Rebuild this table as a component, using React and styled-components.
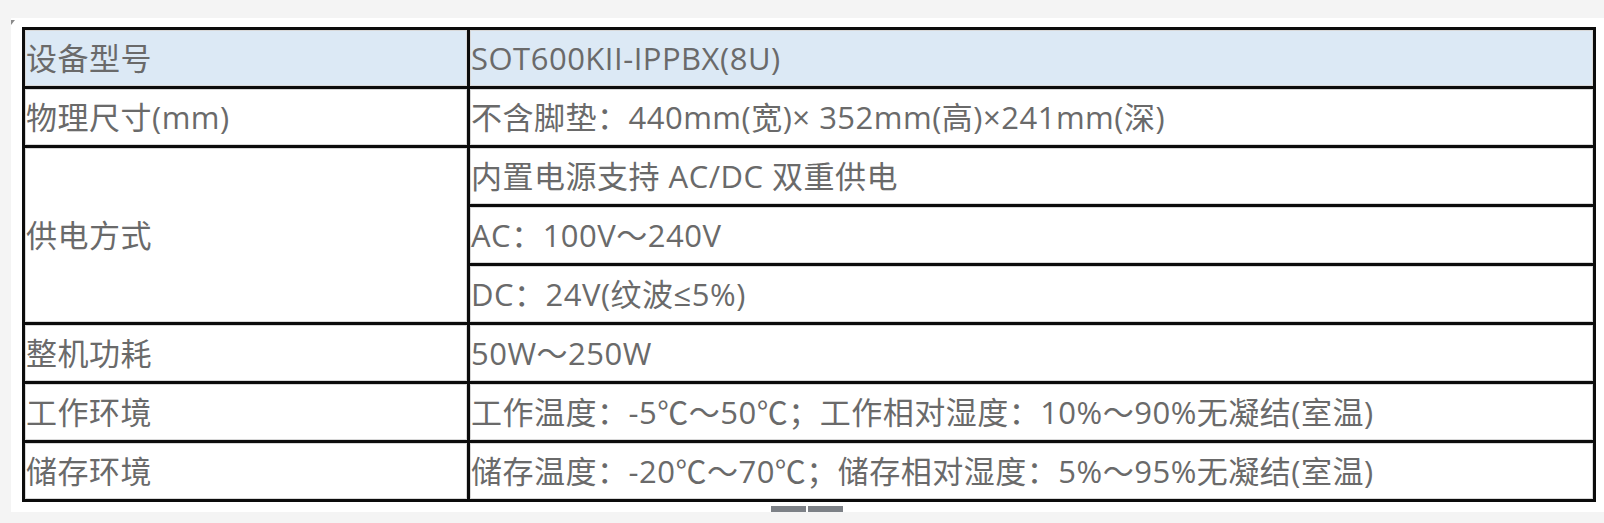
import React from "react";
import styled, { createGlobalStyle } from "styled-components";

const Global = createGlobalStyle`
  html, body { margin: 0; padding: 0; background: #f4f4f4; }
  body { font-family: "Open Sans", "Noto Sans CJK SC", sans-serif; }
`;

const Panel = styled.div`
  position: relative;
  margin: 18px 0 0 11px;
  height: 494px;
  background: #ffffff;
  padding: 9px 8px 0 11px;
  box-sizing: border-box;
`;

const Corner = styled.svg`
  position: absolute;
  left: 0;
  top: 2px;
`;

const Table = styled.table`
  width: 1574px;
  table-layout: fixed;
  border-collapse: separate;
  border-spacing: 0;
  border-top: 3px solid #0c0c0c;
  border-left: 3px solid #0c0c0c;
`;

const Row = styled.tr`
  background: ${(p) => (p.$head ? "#dce9f5" : "#ffffff")};
`;

const Cell = styled.td`
  height: 56px;
  padding: 0 0 0 1px;
  border-right: 3px solid #0c0c0c;
  border-bottom: 3px solid #0c0c0c;
  box-shadow: inset 0 0 0 1px #d8d8d8;
  font-size: 31px;
  letter-spacing: 0.5px;
  line-height: 36px;
  color: #6a6a6a;
  white-space: nowrap;
  vertical-align: middle;
  box-sizing: content-box;
`;

const Handle = styled.div`
  display: flex;
  justify-content: center;
  gap: 2px;
  margin: 4px 0 0 0;
  padding-right: 4px;
`;

const HandlePart = styled.div`
  width: 35px;
  height: 6px;
  background: #7d8187;
`;

const rows = [
  { label: "设备型号", values: ["SOT600KII-IPPBX(8U)"], head: true },
  { label: "物理尺寸(mm)", values: ["不含脚垫：440mm(宽)×  352mm(高)×241mm(深)"] },
  {
    label: "供电方式",
    values: ["内置电源支持 AC/DC 双重供电", "AC：100V～240V", "DC：24V(纹波≤5%)"],
  },
  { label: "整机功耗", values: ["50W～250W"] },
  { label: "工作环境", values: ["工作温度：-5℃～50℃；工作相对湿度：10%～90%无凝结(室温)"] },
  { label: "储存环境", values: ["储存温度：-20℃～70℃；储存相对湿度：5%～95%无凝结(室温)"] },
];

export default function App() {
  return (
    <>
      <Global />
      <Panel>
        <Corner width="4" height="5" viewBox="0 0 4 5">
          <path d="M0 0 L4 0 L0 5 Z" fill="#8a8a8a" />
        </Corner>
        <Table>
          <colgroup>
            <col style={{ width: "445px" }} />
            <col />
          </colgroup>
          <tbody>
            {rows.map((r) =>
              r.values.map((v, i) => (
                <Row key={r.label + i} $head={r.head}>
                  {i === 0 && <Cell rowSpan={r.values.length}>{r.label}</Cell>}
                  <Cell>{v}</Cell>
                </Row>
              ))
            )}
          </tbody>
        </Table>
        <Handle>
          <HandlePart />
          <HandlePart />
        </Handle>
      </Panel>
    </>
  );
}
